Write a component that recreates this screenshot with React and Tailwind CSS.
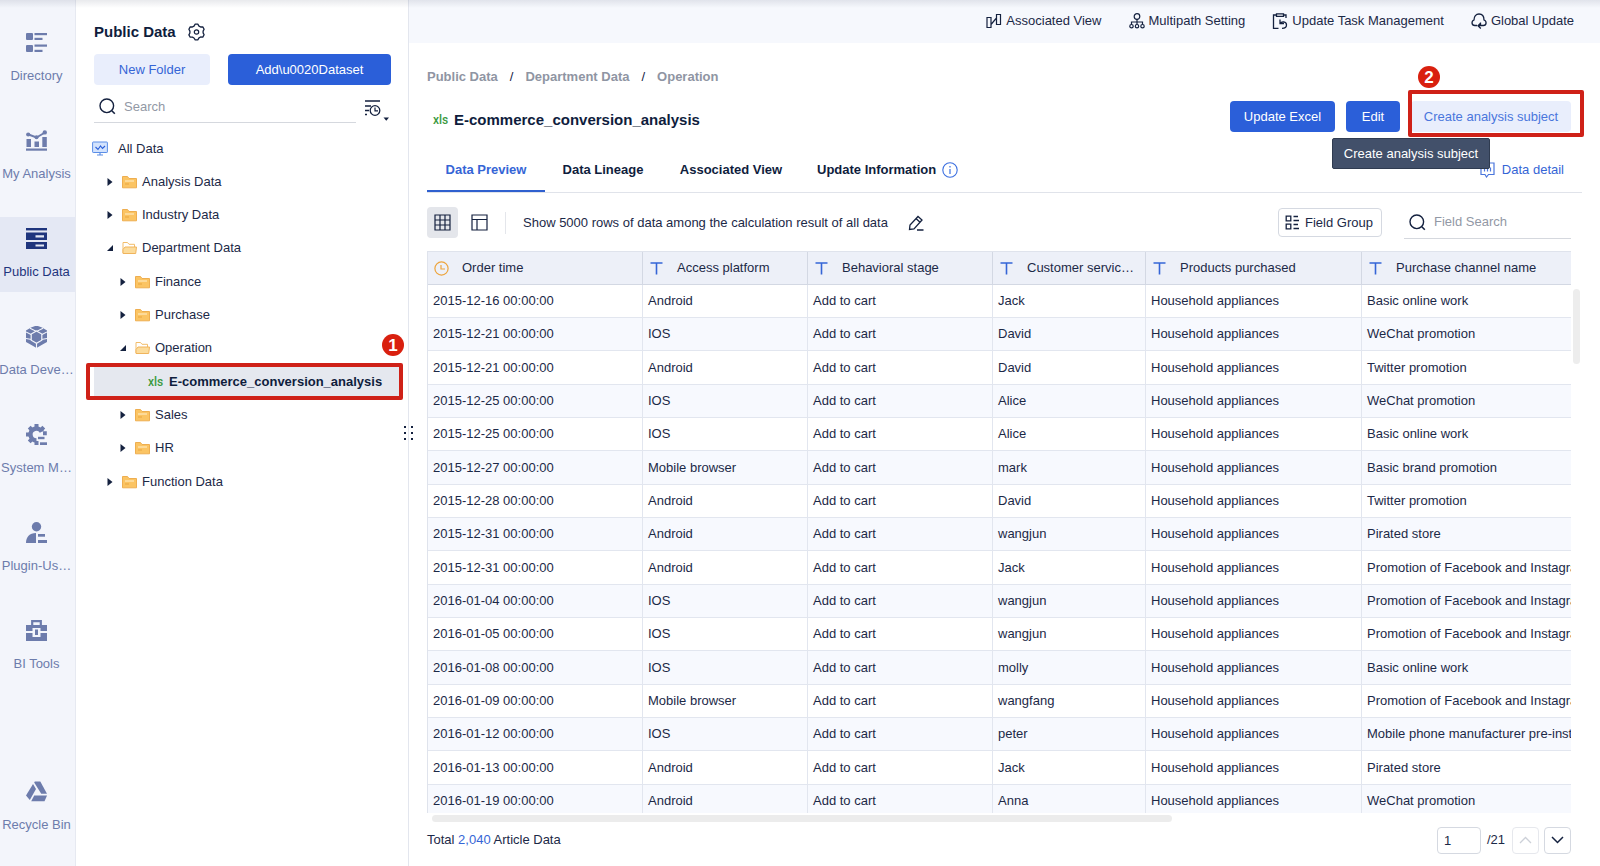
import React from "react";

const NAVY = "#14213f";

function Svg({ w = 16, h = 16, vb, className = "", children, ...rest }) {
  return (
    <svg
      width={w}
      height={h}
      viewBox={vb || `0 0 ${w} ${h}`}
      fill="none"
      aria-hidden="true"
      className={`shrink-0 ${className}`}
      {...rest}
    >
      {children}
    </svg>
  );
}

/* ---------- navigation rail icons (21 x 21) ---------- */

const railIcons = {
  directory: (
    <g fill="currentColor">
      <rect x="0" y="1" width="7" height="7" rx="1" />
      <rect x="0" y="13" width="7" height="7" rx="1" />
      <rect x="8.500" y="1" width="12.500" height="2.200" />
      <rect x="8.500" y="5.800" width="8" height="2.200" />
      <rect x="8.500" y="12.500" width="12.500" height="2.200" />
      <rect x="8.500" y="17.800" width="8" height="2.200" />
    </g>
  ),
  analysis: (
    <g>
      <path d="M2.500 4.500 10.500 7.500 19 2.500" stroke="currentColor" strokeWidth="1.900" />
      <g fill="currentColor">
        <circle cx="2.200" cy="4.500" r="2.100" />
        <circle cx="10.500" cy="7.200" r="2" />
        <circle cx="18.800" cy="2.400" r="2.200" />
        <rect x="0.500" y="9" width="4.500" height="8" />
        <rect x="8.500" y="11.500" width="4.500" height="5.500" />
        <rect x="16.300" y="7" width="4.500" height="10" />
        <rect x="0" y="18.500" width="21" height="2.200" />
      </g>
    </g>
  ),
  data: (
    <g fill="currentColor" fillRule="evenodd">
      <rect x="0" y="0" width="21" height="2.400" />
      <path d="M0 4.500h21v7.500H0zM9.500 7.200v2.200h8.500V7.200z" />
      <path d="M0 14h21v7H0zM9.500 16.400v2.200h8.500v-2.200z" />
    </g>
  ),
  develop: (
    <g>
      <path d="M10.500-.5 16 1.500 21 4.500v11.500l-4.500 2.500-6 3.500-6-3.500L0 16V4.500l5-3z" fill="currentColor" />
      <path
        d="M10.500 16v6M4 2.200l6.500 3.300L17 2.200M0 6l5.500 2.700M21 6l-5.500 2.700M0 12.500l5.500 1M21 12.500l-5.500 1"
        stroke="#f3f5fb"
        strokeWidth="1.100"
      />
      <path
        d="M10.500 5 15.800 8v6.200l-5.300 3-5.300-3V8z"
        fill="currentColor"
        stroke="#f3f5fb"
        strokeWidth="1.200"
      />
    </g>
  ),
  system: (
    <g>
      <path d="M15.800 7.800A6 6 0 1 0 10.500 16.500" stroke="currentColor" strokeWidth="4.400" />
      <path
        d="M10.500 0v4M3.200 3.200l2.800 2.800M0 10.500h4M3.200 17.800l2.800-2.800M10.500 21v-4M17.800 3.200l-2.800 2.800M17 9.300h3.800"
        stroke="currentColor"
        strokeWidth="4"
      />
      <g fill="currentColor">
        <rect x="12" y="12.800" width="6.500" height="2.400" />
        <rect x="14" y="18.300" width="7" height="2.700" />
      </g>
    </g>
  ),
  plugin: (
    <g fill="currentColor">
      <circle cx="10.500" cy="4.700" r="4.700" />
      <path d="M0 21c0-6 3.500-10 10-10v10z" />
      <rect x="12" y="12" width="7" height="2.700" />
      <rect x="12" y="18" width="9" height="3" />
    </g>
  ),
  tools: (
    <g>
      <path d="M6.200 6V1.200h8.600V6" stroke="currentColor" strokeWidth="2.200" />
      <g fill="currentColor" fillRule="evenodd">
        <path d="M0 5h21v6h-6.500V8h-8v3H0z" />
        <path d="M0 13h6.500v4h8v-4H21v8H0z" />
        <rect x="9" y="9.500" width="3" height="5.500" />
      </g>
    </g>
  ),
  recycle: (
    <g fill="currentColor">
      <path d="M8.800 0.500h5.500L21 12.800h-5.800L8.200 1.500z" />
      <path d="M7 3 10 8 3.800 19 0 14.500z" />
      <path d="M8.200 14.500H21L18.500 20.300H5.200z" />
    </g>
  ),
};

const railItems = [
  ["directory", "Directory"],
  ["analysis", "My Analysis"],
  ["data", "Public Data"],
  ["develop", "Data Deve…"],
  ["system", "System M…"],
  ["plugin", "Plugin-Us…"],
  ["tools", "BI Tools"],
];

function RailItem({ icon, label, active }) {
  return (
    <a
      href="#"
      aria-current={active ? "page" : undefined}
      className={`flex h-[75px] w-[75px] shrink-0 flex-col items-center pr-0.5 pt-[11px] ${
        active ? "bg-[#e4e8f4] text-[#1f357d]" : "text-[#6d7cac]"
      }`}
    >
      <Svg w={21} h={22}>{railIcons[icon]}</Svg>
      <span className="mt-3 whitespace-nowrap leading-5">{label}</span>
    </a>
  );
}

/* ---------- shared icons ---------- */

function SearchIcon() {
  return (
    <Svg w={17} h={17}>
      <circle cx="7.800" cy="7.800" r="6.800" stroke={NAVY} strokeWidth="1.400" />
      <path d="m12.800 12.800 3 3" stroke={NAVY} strokeWidth="1.600" />
    </Svg>
  );
}

function XlsLabel() {
  return (
    <span className="w-[15px] shrink-0 font-[Roboto,'Liberation_Sans',sans-serif] text-[12px] font-medium leading-4 text-[#3c9a3f]">
      xls
    </span>
  );
}

function Folder({ open }) {
  return open ? (
    <Svg w={15} h={14}>
      <path d="M1 12V1.500h4.500L7 3.300h5.500V6" stroke="#f2bd6b" />
      <path d="M1 12.500V8.500L3 6h11.500l-.8 6.500z" fill="#fcdc9c" stroke="#f0b45c" />
    </Svg>
  ) : (
    <Svg w={15} h={14}>
      <path d="M.5 12.800V1.500h5l1.500 2h7.500v9.300z" fill="#fbc463" stroke="#eeae50" />
      <path d="M3 6h9" stroke="#fff0cf" />
      <path d="M3 9h4" stroke="#e9a640" />
    </Svg>
  );
}

function Caret({ open }) {
  return (
    <Svg w={6} h={8}>
      <path d={open ? "M6 1v6H0z" : "M.5 0 5.500 4 .5 8z"} fill={NAVY} />
    </Svg>
  );
}

/* ---------- folder tree ---------- */

const tree = [
  { level: 1, label: "Analysis Data" },
  { level: 1, label: "Industry Data" },
  { level: 1, label: "Department Data", open: true },
  { level: 2, label: "Finance" },
  { level: 2, label: "Purchase" },
  { level: 2, label: "Operation", open: true },
  { level: 3, label: "E-commerce_conversion_analysis", file: true },
  { level: 2, label: "Sales" },
  { level: 2, label: "HR" },
  { level: 1, label: "Function Data" },
];

const indent = { 1: "pl-[13px]", 2: "pl-[26px]", 3: "pl-[54px]" };

function Marker({ children, className }) {
  return (
    <span
      className={`absolute flex size-[22px] items-center justify-center rounded-full bg-[#d9200f] text-[17px] font-bold leading-none text-white ${className}`}
    >
      {children}
    </span>
  );
}

function TreeRow({ level, label, open, file }) {
  return (
    <li className="relative h-[33px] nth-[3n]:h-[34px]">
      <button
        type="button"
        className={`flex h-full w-full items-center whitespace-nowrap text-left ${indent[level]} ${
          file ? "bg-[#e5e8ef] font-bold text-[#0f1d3d]" : ""
        }`}
      >
        {file ? <XlsLabel /> : <Caret open={open} />}
        {!file && (
          <span className="ml-[9px]">
            <Folder open={open} />
          </span>
        )}
        <span className={file ? "ml-1.5" : "ml-[5px]"}>{label}</span>
      </button>
      {file && (
        <>
          <span className="pointer-events-none absolute -bottom-0.5 -left-2 -right-1 -top-0.5 rounded-xs border-4 border-[#cf2118]" />
          <Marker className="-right-[5px] -top-[31px]">1</Marker>
        </>
      )}
    </li>
  );
}

function Sidebar() {
  return (
    <aside className="relative flex w-[333px] shrink-0 flex-col border-r border-[#e3e6ee] bg-white pl-[18px] pr-[17px] pt-[21px]">
      <div className="flex h-[22px] items-center gap-3">
        <h2 className="text-[15px] font-bold text-[#0f1d3d]">Public Data</h2>
        <button type="button" aria-label="Settings">
          <Svg w={17} h={18}>
            <path
              d="M7.200 1.200h2.600L11 3.100l1.600.9 2.200-.1 1.300 2.300-1 1.900v1.800l1 1.900-1.300 2.300-2.200-.1-1.600.9-1.200 1.900H7.200L6 15l-1.600-.9-2.200.1L.9 11.900l1-1.900V8.100l-1-1.900 1.300-2.300 2.200.1L6 3.100z"
              stroke={NAVY}
              strokeWidth="1.300"
              strokeLinejoin="round"
            />
            <circle cx="8.500" cy="9" r="2.200" stroke={NAVY} strokeWidth="1.200" />
          </Svg>
        </button>
      </div>
      <div className="mt-[11px] flex gap-[18px]">
        <button type="button" className="h-[31px] w-[116px] rounded-sm bg-[#e9eefc] text-[#3565d6]">
          New Folder
        </button>
        <button type="button" className="h-[31px] flex-1 rounded-sm bg-[#2b5fd9] text-white">
          {"Add\\u0020Dataset"}
        </button>
      </div>
      <div className="mt-1.5 flex items-center">
        <label className="flex h-8 w-[262px] items-center gap-2 border-b border-[#d5d8de] pl-[5px]">
          <SearchIcon />
          <input
            type="text"
            placeholder="Search"
            aria-label="Search"
            className="min-w-0 flex-1 bg-transparent outline-none placeholder:text-[#9298a5]"
          />
        </label>
        <button type="button" aria-label="Sort order" className="ml-2 mt-1.5 flex items-end">
          <Svg w={25} h={22}>
            <path d="M1 2h15M1 7h6M1 11.500h4M1 15.500h2" stroke={NAVY} strokeWidth="1.300" />
            <circle cx="11" cy="11.500" r="4.800" stroke={NAVY} strokeWidth="1.300" />
            <path d="M11 8.500v3.300h3" stroke={NAVY} strokeWidth="1.200" />
            <path d="M19.500 18.500h5.500l-2.700 3.300z" fill={NAVY} />
          </Svg>
        </button>
      </div>
      <ul className="mt-[9px]">
        <li className="h-[33px]">
          <button type="button" className="-ml-0.5 flex h-full items-center gap-2.5">
            <Svg w={16} h={15}>
              <rect x=".6" y="1" width="14.800" height="10.500" rx=".6" fill="#d3e3fd" stroke="#5a8de6" />
              <path d="m3.500 6 2.500 2.500L8.500 5l2 2.500L13 5" stroke="#2b5fd9" strokeWidth="1.100" />
              <path d="M8 11.500V14M5 14h6" stroke="#5a8de6" strokeWidth="1.200" />
            </Svg>
            All Data
          </button>
        </li>
        <li>
          <ul className="-mr-2">
            {tree.map((row) => (
              <TreeRow key={row.label} {...row} />
            ))}
          </ul>
        </li>
      </ul>
      <span className="absolute -right-[6px] top-[425px] z-10">
        <Svg w={10} h={16}>
          <g fill={NAVY}>
            {[1, 7, 13].map((y) => (
              <React.Fragment key={y}>
                <rect x="0" y={y} width="2" height="2" />
                <rect x="7" y={y} width="2" height="2" />
              </React.Fragment>
            ))}
          </g>
        </Svg>
      </span>
    </aside>
  );
}

/* ---------- top bar ---------- */

const topActions = [
  {
    label: "Associated View",
    icon: (
      <path d="M1 4.500h4v10H1zM10.500 1.500h4v10h-4zM5 11.500 10.500 5" stroke={NAVY} strokeWidth="1.200" />
    ),
  },
  {
    label: "Multipath Setting",
    icon: (
      <g stroke={NAVY} strokeWidth="1.200">
        <circle cx="8" cy="3.500" r="2.800" />
        <path d="M8 6.300v5.200M2.500 11.500V9h11v2.500" />
        <circle cx="2.500" cy="13.200" r="1.700" />
        <circle cx="8" cy="13.200" r="1.700" />
        <circle cx="13.500" cy="13.200" r="1.700" />
      </g>
    ),
  },
  {
    label: "Update Task Management",
    icon: (
      <g stroke={NAVY} strokeWidth="1.300">
        <path d="M4 2H1.500v13.300H6.500M11.500 2H14v3M4.500.8h7v2.500h-7z" />
        <path d="M8 6.500v4h4M8.300 10.300c1-2 6.200-2.300 6.200 1.700 0 2.300-1.500 3.300-4.500 3.300" />
      </g>
    ),
  },
  {
    label: "Global Update",
    icon: (
      <path
        d="M6 12.500H3.800C.3 12.500.2 8 3 7c0-3.800 2-6 5-6s5 2.200 5 6c3 1 2.700 5.500-.6 5.500H9.500M9.500 9.500v3M7 12.500h2.500M9.800 10 7 12.700l2.800 2.800"
        stroke={NAVY}
        strokeWidth="1.300"
      />
    ),
  },
];

function TopBar() {
  return (
    <header className="flex h-[43px] shrink-0 items-center justify-end gap-[27px] bg-[#f6f8fd] pb-0.5 pr-[26px]">
      {topActions.map((a) => (
        <button key={a.label} type="button" className="flex items-center gap-1">
          <Svg>{a.icon}</Svg>
          {a.label}
        </button>
      ))}
    </header>
  );
}

/* ---------- data table ---------- */

const columns = [
  { label: "Order time", width: "w-[215px]", time: true },
  { label: "Access platform", width: "w-[165px]" },
  { label: "Behavioral stage", width: "w-[185px]" },
  { label: "Customer servic…", width: "w-[153px]" },
  { label: "Products purchased", width: "w-[216px]" },
  { label: "Purchase channel name", width: "" },
];

const rows = [
  ["2015-12-16", "Android", "Jack", "Basic online work"],
  ["2015-12-21", "IOS", "David", "WeChat promotion"],
  ["2015-12-21", "Android", "David", "Twitter promotion"],
  ["2015-12-25", "IOS", "Alice", "WeChat promotion"],
  ["2015-12-25", "IOS", "Alice", "Basic online work"],
  ["2015-12-27", "Mobile browser", "mark", "Basic brand promotion"],
  ["2015-12-28", "Android", "David", "Twitter promotion"],
  ["2015-12-31", "Android", "wangjun", "Pirated store"],
  ["2015-12-31", "Android", "Jack", "Promotion of Facebook and Instagram"],
  ["2016-01-04", "IOS", "wangjun", "Promotion of Facebook and Instagram"],
  ["2016-01-05", "IOS", "wangjun", "Promotion of Facebook and Instagram"],
  ["2016-01-08", "IOS", "molly", "Basic online work"],
  ["2016-01-09", "Mobile browser", "wangfang", "Promotion of Facebook and Instagram"],
  ["2016-01-12", "IOS", "peter", "Mobile phone manufacturer pre-installation"],
  ["2016-01-13", "Android", "Jack", "Pirated store"],
  ["2016-01-19", "Android", "Anna", "WeChat promotion"],
];

function DataTable() {
  return (
    <table className="w-full table-fixed border-separate border-spacing-0 border-l border-t border-[#dfe3ec]">
      <thead>
        <tr className="h-[33px] bg-[#edf0f8]">
          {columns.map((c) => (
            <th
              key={c.label}
              className={`border-b border-r border-[#d3d8e3] p-0 text-left font-normal last:border-r-0 ${c.width}`}
            >
              <span className="flex items-center gap-[13px] whitespace-nowrap pl-1.5">
                <Svg w={15} h={15}>
                  {c.time ? (
                    <g stroke="#eda43c" strokeWidth="1.200">
                      <circle cx="7.500" cy="7.500" r="6.600" />
                      <path d="M7 4v4h4" />
                    </g>
                  ) : (
                    <path d="M1.500 2h12M7.500 2v11.500" stroke="#3565d6" strokeWidth="1.600" />
                  )}
                </Svg>
                {c.label}
              </span>
            </th>
          ))}
        </tr>
      </thead>
      <tbody>
        {rows.map(([date, platform, service, channel], i) => (
          <tr key={i} className="h-[33px] even:bg-[#f7f9fe] nth-[3n]:h-[34px]">
            {[`${date} 00:00:00`, platform, "Add to cart", service, "Household appliances", channel].map(
              (text, j) => (
                <td
                  key={j}
                  className="overflow-hidden whitespace-nowrap border-b border-r border-[#e2e6ef] p-0 pl-[5px] last:border-r-0"
                >
                  {text}
                </td>
              )
            )}
          </tr>
        ))}
      </tbody>
    </table>
  );
}

/* ---------- main panel ---------- */

function PageHeader() {
  return (
    <div className="flex justify-between">
      <div>
        <nav aria-label="Breadcrumb" className="mt-6 flex gap-3 font-bold leading-5 text-[#8f95a3]">
          <a href="#">Public Data</a>
          <span className="font-normal text-[#14213f]">/</span>
          <a href="#">Department Data</a>
          <span className="font-normal text-[#14213f]">/</span>
          <a href="#">Operation</a>
        </nav>
        <h1 className="mt-[23px] flex items-center gap-1.5 pl-1.5 text-[15px] font-bold leading-5 text-[#0f1d3d]">
          <XlsLabel />
          E-commerce_conversion_analysis
        </h1>
      </div>
      <div className="mr-[29px] mt-[58px] flex gap-[11px] self-start">
        <button type="button" className="h-[31px] w-[105px] rounded-sm bg-[#2b5fd9] text-white">
          Update Excel
        </button>
        <button type="button" className="h-[31px] w-[54px] rounded-sm bg-[#2b5fd9] text-white">
          Edit
        </button>
        <div className="relative">
          <button type="button" className="h-[31px] w-[160px] rounded-sm bg-[#e9eefc] text-[#4a76dc]">
            Create analysis subject
          </button>
          <span className="pointer-events-none absolute -bottom-[5px] -left-[3px] -right-[13px] -top-[11px] rounded-xs border-4 border-[#cf2118]" />
          <Marker className="-top-[35px] left-[7px]">2</Marker>
          <span
            role="tooltip"
            className="absolute -left-[79px] top-[37px] z-10 flex h-[31px] w-[158px] items-center justify-center whitespace-nowrap rounded-xs border border-[#2f3b50] bg-[#42506a] text-white"
          >
            Create analysis subject
          </span>
        </div>
      </div>
    </div>
  );
}

function Tabs() {
  const tab = "flex h-11 items-center justify-center";
  return (
    <div className="mr-[18px] mt-4 flex h-[45px] items-stretch justify-between border-b border-[#e0e3ea]">
      <div role="tablist" className="flex font-bold text-[#0f1d3d]">
        <button
          type="button"
          role="tab"
          aria-selected="true"
          className={`${tab} -mb-px w-[118px] border-b-2 border-[#2f60cf] pt-0.5 text-[#3565d6]`}
        >
          Data Preview
        </button>
        <button type="button" role="tab" aria-selected="false" className={`${tab} w-[116px]`}>
          Data Lineage
        </button>
        <button type="button" role="tab" aria-selected="false" className={`${tab} w-[140px]`}>
          Associated View
        </button>
        <button type="button" role="tab" aria-selected="false" className={`${tab} gap-1.5 pl-4`}>
          Update Information
          <Svg>
            <circle cx="8" cy="8" r="7.200" stroke="#3b6fe0" strokeWidth="1.100" />
            <path d="M8 7v5M8 4v1.500" stroke="#3b6fe0" strokeWidth="1.200" />
          </Svg>
        </button>
      </div>
      <button type="button" className="mr-[18px] flex h-11 items-center gap-[7px] text-[#3565d6]">
        <Svg w={15} h={16}>
          <path
            d="M1 1h13v11.500H8.500L6.500 15 5 12.500H1zM4.500 9.500V7M7.500 9.500V4M10.500 9.500v-4"
            stroke="#4a76dc"
            strokeWidth="1.200"
          />
        </Svg>
        Data detail
      </button>
    </div>
  );
}

function Toolbar() {
  return (
    <div className="mr-[29px] mt-[13px] flex h-[33px] items-center">
      <button
        type="button"
        aria-label="Table view"
        className="flex size-[31px] items-center justify-center rounded-sm bg-[#e4e6eb]"
      >
        <Svg w={17} h={17}>
          <path
            d="M1 1h15v15H1zM1 6h15M1 11h15M6 1v15M11 1v15"
            stroke={NAVY}
            strokeWidth="1.200"
          />
        </Svg>
      </button>
      <button type="button" aria-label="Column view" className="ml-[13px]">
        <Svg w={17} h={17}>
          <path d="M1 1h15v15H1zM1 5.500h15M6 5.500V16" stroke={NAVY} strokeWidth="1.200" />
        </Svg>
      </button>
      <span className="ml-[17px] h-[22px] w-px bg-[#e4e6eb]" />
      <p className="ml-[17px] w-[380px] whitespace-nowrap">
        Show 5000 rows of data among the calculation result of all data
      </p>
      <button type="button" aria-label="Edit row limit" className="ml-[5px]">
        <Svg>
          <path
            d="m1.500 14.500.5-4.500 8-8.500 4 3.500-8 9zM8 3.500l4 3.800M9 15h6.500"
            stroke={NAVY}
            strokeWidth="1.300"
          />
        </Svg>
      </button>
      <button
        type="button"
        className="ml-auto flex h-[29px] w-[104px] shrink-0 items-center gap-[5px] rounded-sm border border-[#d5d9e1] bg-white pl-1.5"
      >
        <Svg w={15} h={15}>
          <path
            d="M1.200 1.200h4.600v4.600H1.200zM1.200 9.200h4.600v4.600H1.200zM8.500 1.500h4.500M8.500 5.500H14M8.500 9.500h4.500M8.500 13.500H14"
            stroke={NAVY}
            strokeWidth="1.300"
          />
        </Svg>
        Field Group
      </button>
      <label className="ml-[22px] flex h-[33px] w-[167px] shrink-0 items-center gap-2 border-b border-[#d5d8de] pl-[5px]">
        <SearchIcon />
        <input
          type="text"
          placeholder="Field Search"
          aria-label="Field Search"
          className="min-w-0 flex-1 bg-transparent outline-none placeholder:text-[#9298a5]"
        />
      </label>
    </div>
  );
}

function Footer() {
  return (
    <footer className="mr-[29px] flex h-11 shrink-0 items-center pb-2">
      <p>
        Total <span className="text-[#3565d6]">2,040</span> Article Data
      </p>
      <input
        type="text"
        defaultValue="1"
        aria-label="Page"
        className="ml-auto h-[27px] w-11 rounded-sm border border-[#d5d9e1] bg-white pl-1.5 outline-none"
      />
      <span className="ml-1.5 w-[25px]">/21</span>
      <button
        type="button"
        disabled
        aria-label="Previous page"
        className="flex h-[27px] w-[27px] items-center justify-center rounded-sm border border-[#e6e8ed]"
      >
        <Svg w={13} h={8}>
          <path d="m1 7 5.500-5.500L12 7" stroke="#ccd0d8" strokeWidth="1.300" />
        </Svg>
      </button>
      <button
        type="button"
        aria-label="Next page"
        className="ml-[5px] flex h-[27px] w-[27px] items-center justify-center rounded-sm border border-[#d5d9e1]"
      >
        <Svg w={13} h={8}>
          <path d="m1 1 5.500 5.500L12 1" stroke={NAVY} strokeWidth="1.500" />
        </Svg>
      </button>
    </footer>
  );
}

export default function App() {
  return (
    <div className="relative flex h-screen overflow-hidden bg-white font-['Liberation_Sans',Arial,sans-serif] text-[13px] leading-5 text-[#1c2947]">
      <nav
        aria-label="Main"
        className="flex w-[76px] shrink-0 flex-col gap-[23px] overflow-hidden border-r border-[#e6e9f1] bg-[#f3f5fb] pb-[21px] pt-[21px]"
      >
        {railItems.map(([icon, label]) => (
          <RailItem key={icon} icon={icon} label={label} active={icon === "data"} />
        ))}
        <div className="mt-auto">
          <RailItem icon="recycle" label="Recycle Bin" />
        </div>
      </nav>
      <Sidebar />
      <div className="flex min-w-0 flex-1 flex-col">
        <TopBar />
        <main className="flex min-h-0 flex-1 flex-col pl-[18px]">
          <PageHeader />
          <Tabs />
          <Toolbar />
          <div className="mt-3 flex min-h-0 flex-1 pr-5">
            <div className="min-w-0 flex-1 overflow-hidden">
              <DataTable />
            </div>
            <div className="ml-0.5 mt-[38px] h-[75px] w-[7px] rounded-full bg-[#ededed]" />
          </div>
          <div className="mr-[29px] mt-0.5 shrink-0 pl-[5px]">
            <div className="h-[7px] w-[65%] rounded-full bg-[#ececec]" />
          </div>
          <Footer />
        </main>
      </div>
      <div className="pointer-events-none absolute inset-x-0 top-0 h-2 bg-linear-to-b from-[#1f2a4a]/10 to-transparent" />
    </div>
  );
}
